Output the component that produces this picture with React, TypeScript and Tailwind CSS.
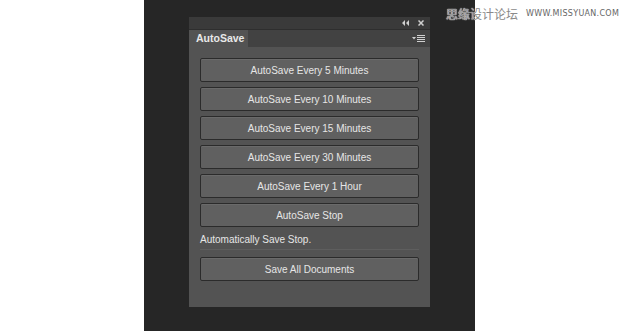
import React from "react";

const buttons = [
  "AutoSave Every 5 Minutes",
  "AutoSave Every 10 Minutes",
  "AutoSave Every 15 Minutes",
  "AutoSave Every 30 Minutes",
  "AutoSave Every 1 Hour",
  "AutoSave Stop",
];

function Btn({ label }: { label: string }) {
  return (
    <div className="h-[24px] w-full rounded-[2px] border border-[#2b2b2b] bg-[#606060] flex items-center justify-center text-[10px] text-[#e6e6e6] shadow-[inset_0_1px_0_#6a6a6a]">
      {label}
    </div>
  );
}

export default function App() {
  return (
    <div
      className="relative w-[620px] h-[331px] bg-white flex overflow-hidden"
      style={{ fontFamily: '"Liberation Sans", Arial, sans-serif' }}
    >
      <div className="ml-[144px] w-[331px] h-full bg-[#262626] pt-[17px] pl-[45px]">
        <div className="w-[241px] h-[290px] bg-[#535353] flex flex-col">
          <div className="h-[12px] bg-[#3a3a3a] flex items-center justify-end gap-[9px] pr-[6px] text-[#d0d0d0]">
            <svg width="7" height="6" viewBox="0 0 7 6">
              <path d="M3 0 L0 3 L3 6 Z M7 0 L4 3 L7 6 Z" fill="#d0d0d0" />
            </svg>
            <svg width="6" height="6" viewBox="0 0 6 6">
              <path d="M0.5 0.5 L5.5 5.5 M5.5 0.5 L0.5 5.5" stroke="#d0d0d0" strokeWidth="1.5" />
            </svg>
          </div>
          <div className="h-[18px] bg-[#424242] flex items-stretch border-t border-[#2e2e2e]">
            <div className="w-[59px] bg-[#535353] flex items-center pl-[7px] text-[10.5px] font-bold text-[#e8e8e8]">
              AutoSave
            </div>
            <div className="flex-1 flex items-center justify-end pr-[5px]">
              <svg width="13" height="8" viewBox="0 0 13 8">
                <path d="M0 2 L4 2 L2 4.5 Z" fill="#d0d0d0" />
                <path d="M5 0.5 H13 M5 2.5 H13 M5 4.5 H13 M5 6.5 H13" stroke="#d0d0d0" strokeWidth="1" />
              </svg>
            </div>
          </div>
          <div className="flex flex-col px-[11px] pt-[11px]">
            <div className="flex flex-col gap-[5px]">
              {buttons.map((b) => (
                <Btn key={b} label={b} />
              ))}
            </div>
            <div className="h-[22px] flex items-center pt-[3px] text-[10px] text-[#e6e6e6]">
              Automatically Save Stop.
            </div>
            <div className="h-px bg-[#3a3a3a] border-b border-[#5e5e5e]" />
            <div className="mt-[7px]">
              <Btn label="Save All Documents" />
            </div>
          </div>
        </div>
      </div>
      <div className="absolute left-[446px] top-[7px] flex items-center gap-[8px] whitespace-nowrap">
        <span
          className="text-[12px] leading-[14px] text-[#8a8a8a]"
          style={{ fontFamily: '"Noto Sans CJK SC", sans-serif', textShadow: "0 0 1px #fff, 0 0 1px #fff" }}
        >
          思缘设计论坛
        </span>
        <span className="text-[8px] text-[#666] tracking-[0.3px]" style={{ fontFamily: '"DejaVu Sans", sans-serif' }}>
          WWW.MISSYUAN.COM
        </span>
      </div>
    </div>
  );
}
